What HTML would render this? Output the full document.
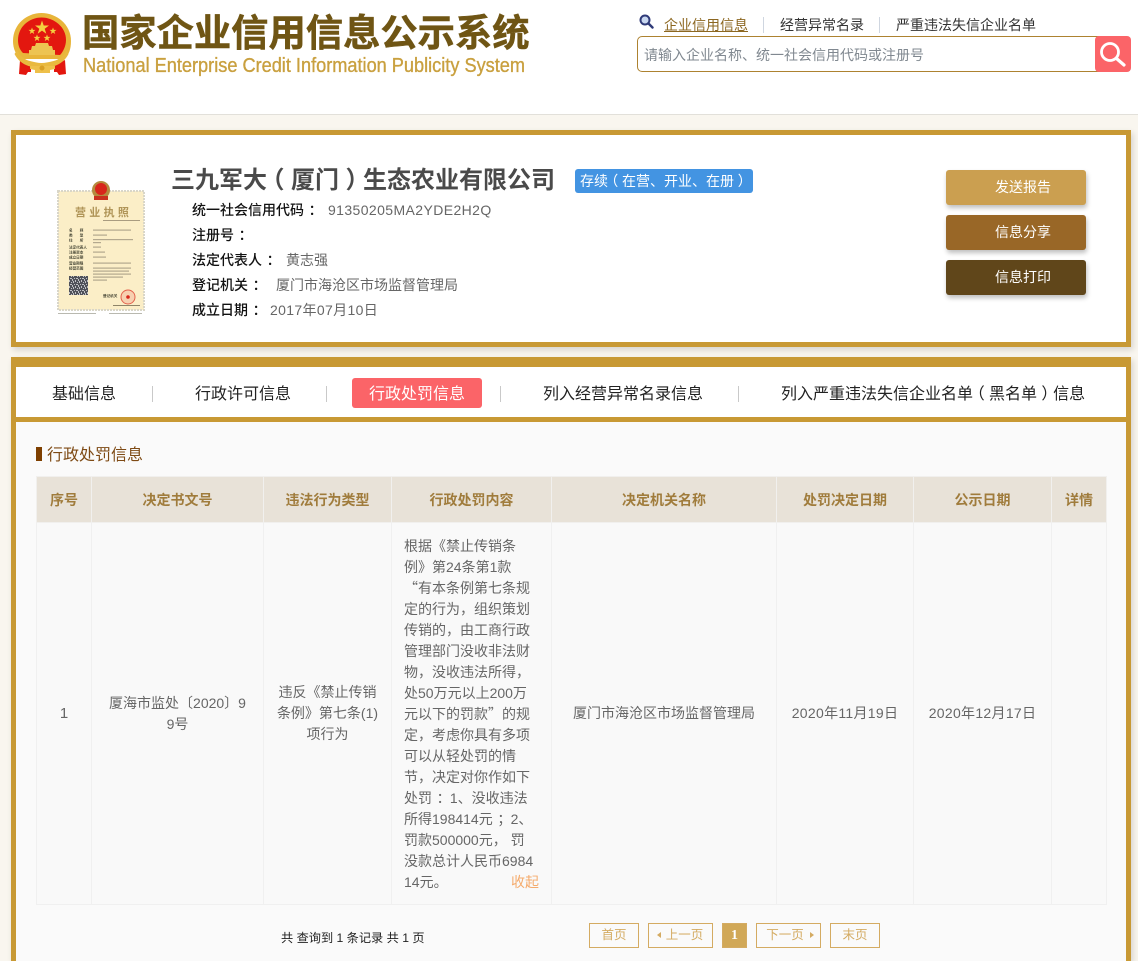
<!DOCTYPE html>
<html lang="zh-CN">
<head>
<meta charset="utf-8">
<title>国家企业信用信息公示系统</title>
<style>
*{margin:0;padding:0;box-sizing:border-box}
html,body{width:1138px;height:961px;overflow:hidden;background:#f9f6ef}
body{position:relative;font-family:"Liberation Sans","Noto Sans CJK SC",sans-serif;font-size:14px;color:#555}
.a{position:absolute;white-space:nowrap}
#hd{position:absolute;left:0;top:0;width:1138px;height:115px;background:#fff;border-bottom:1px solid #e2e0da}
.panel{position:absolute;left:11px;width:1120px;background:#fff;border:5px solid #c89934;box-shadow:2px 3px 6px rgba(0,0,0,.14)}
.btn{position:absolute;left:946px;width:140px;height:35px;border-radius:3px;color:#fff;font-size:14px;line-height:35px;text-align:left;padding-left:49px;box-shadow:1px 3px 5px rgba(0,0,0,.25)}
.lb{color:#111;font-weight:500}
.tab{position:absolute;top:383.500px;font-size:16px;line-height:22px;color:#222;white-space:nowrap}
.sep{position:absolute;top:386px;width:1px;height:16px;background:#c9c9c9}
table{position:absolute;left:36px;top:476px;width:1070px;height:429px;border-collapse:collapse;table-layout:fixed;font-size:14px;color:#666}
th{background:#e8e2d8;color:#a07c3c;font-size:14px;font-weight:700;height:46px;border:1px solid #f1f0ee;text-align:center}
td{background:#f9f9f9;border:1px solid #f0f0f0;text-align:center;vertical-align:middle;line-height:21px;padding:0 12px}
.pg{position:absolute;top:923px;height:25px;border:1px solid #d4ab62;color:#d4ab62;font-size:12.500px;line-height:23px;text-align:center;white-space:nowrap}
.tri{position:absolute;top:8px;width:0;height:0;border-top:3.500px solid transparent;border-bottom:3.500px solid transparent}
.l{position:relative;left:-.27em}
.r{position:relative;left:.27em}
.c{position:relative;left:.33em}
.q{font-family:"Noto Sans CJK SC",sans-serif}
</style>
</head>
<body>
<div id="hd"></div>

<svg class="a" style="left:12px;top:12px" width="60" height="66" viewBox="12 12 60 66">
  <path d="M20 60l11 5 0 7-3 0-2 3-7-1z" fill="#e3170f"/>
  <path d="M65 60l-11 5 0 7 3 0 2 3 7-1z" fill="#e3170f"/>
  <path d="M41.500 13C27 13 13 24 13 41c0 8 3 14 8 18l43 0c5-4 7-10 7-18C71 24 56 13 41.500 13z" fill="#e8b53a"/>
  <path d="M41.500 17.500C29 17.500 18 27 18 40c0 6 2 10 5 13l37 2c3-3 6-9 6-15C66 27 54 17.500 41.500 17.500z" fill="#e3170f"/>
  <path d="M42 20.500l1.700 5 5.300 0-4.300 3.200 1.600 5.100-4.300-3.200-4.300 3.200 1.600-5.100-4.300-3.200 5.300 0z" fill="#f4d03f"/>
  <path d="M32 27.500l.9 2.400 2.600 0-2.100 1.600.8 2.500-2.200-1.500-2.200 1.500.8-2.500-2.100-1.600 2.600 0z" fill="#f4d03f"/>
  <path d="M53 27.500l.9 2.400 2.600 0-2.100 1.600.8 2.500-2.200-1.500-2.200 1.500.8-2.500-2.100-1.600 2.600 0z" fill="#f4d03f"/>
  <path d="M37 34.500l.9 2.400 2.600 0-2.100 1.600.8 2.500-2.200-1.500-2.200 1.500.8-2.500-2.100-1.600 2.600 0z" fill="#f4d03f"/>
  <path d="M47 34.500l.9 2.400 2.600 0-2.100 1.600.8 2.500-2.200-1.500-2.200 1.500.8-2.500-2.100-1.600 2.600 0z" fill="#f4d03f"/>
  <path d="M36 43h12l1 3h3l1 4h2v5H29v-5h2l1-4h3z" fill="#edc452"/>
  <path d="M17 50c3 6 8 10 13 11 4 1 8 2 11.500 2s8-1 12-2c5-1 10-5 13-11l2 4c-3 6-8 10-14 12-4 1-9 2-13 2s-9-1-13-2c-6-2-11-6-14-12z" fill="#e9b93e"/>
  <path d="M30 66h25v3l-5 1v3H35v-3l-5-1z" fill="#eec04a"/>
  <circle cx="42" cy="68" r="2.500" fill="#d99f22"/>
</svg>

<div class="a" style="left:82px;top:10px;font-size:37.300px;line-height:46px;font-weight:700;color:#6f5514;-webkit-text-stroke:.5px #6f5514">国家企业信用信息公示系统</div>
<svg class="a" style="left:83px;top:54px" width="445" height="24"><text x="0" y="18" font-family="Liberation Sans" font-size="20" fill="#c9a03f" stroke="#c9a03f" stroke-width=".35" textLength="442" lengthAdjust="spacingAndGlyphs">National Enterprise Credit Information Publicity System</text></svg>

<svg class="a" style="left:639px;top:14px" width="15" height="16" viewBox="0 0 15 16">
  <circle cx="6" cy="6" r="4.500" fill="#c9d8f0" stroke="#2f3a78" stroke-width="2"/>
  <path d="M9.500 9.500L13.500 13.500" stroke="#2f3a78" stroke-width="2.400" stroke-linecap="round"/>
</svg>
<div class="a" style="left:664px;top:15px;font-size:14px;line-height:21px;color:#8c6720;text-decoration:underline">企业信用信息</div>
<div class="a" style="left:763px;top:17px;width:1px;height:16px;background:#cfd6e0"></div>
<div class="a" style="left:780px;top:15px;font-size:14px;line-height:21px;color:#333">经营异常名录</div>
<div class="a" style="left:879px;top:17px;width:1px;height:16px;background:#cfd6e0"></div>
<div class="a" style="left:896px;top:15px;font-size:14px;line-height:21px;color:#333">严重违法失信企业名单</div>

<div class="a" style="left:637px;top:36px;width:470px;height:36px;background:#fff;border:1px solid #ad8230;border-radius:5px 0 0 5px;font-size:14px;line-height:36px;color:#808890;padding-left:6px">请输入企业名称、统一社会信用代码或注册号</div>
<div class="a" style="left:1095px;top:36px;width:36px;height:36px;background:#fb6468;border-radius:4px"></div>
<svg class="a" style="left:1095px;top:36px" width="36" height="36" viewBox="0 0 36 36">
  <circle cx="15" cy="16" r="8.500" fill="none" stroke="#fff" stroke-width="2.800"/>
  <path d="M21.500 22.500l7.500 6.500" stroke="#fff" stroke-width="3.200" stroke-linecap="round"/>
</svg>

<!-- Panel 1 -->
<div class="panel" style="top:130px;height:217px"></div>

<svg class="a" style="left:57px;top:179px" width="88" height="136" viewBox="0 0 88 136">
  <defs>
    <pattern id="qr" width="6" height="6" patternUnits="userSpaceOnUse">
      <rect width="6" height="6" fill="#50525a"/>
      <path d="M0 0h1v1H0zM2 1h1v1H2zM4 0h1v2H4zM1 3h2v1H1zM5 3h1v1H5zM3 4h1v2H3zM0 5h1v1H0z" fill="#bfc0c4"/>
    </pattern>
  </defs>
  <rect x="1" y="12" width="86" height="119" fill="#fbeec7" stroke="#d9d6c8" stroke-width="2" stroke-dasharray="2 1"/>
  <circle cx="44" cy="11" r="9" fill="#b58a3e"/>
  <circle cx="44" cy="10" r="6" fill="#d8261b"/>
  <rect x="37" y="17" width="14" height="4" fill="#c9301f"/>
  <text x="18" y="37" font-size="11" font-weight="700" fill="#b09558" font-family="Noto Sans CJK SC" letter-spacing="3.300">营业执照</text>
  <rect x="46" y="41" width="37" height="1" fill="#a99c80"/>
  <g fill="#b3a88e">
    <text x="12" y="52.500" font-size="3.600" fill="#443" font-family="Noto Sans CJK SC" font-weight="700">名　　称</text>
    <text x="12" y="57.500" font-size="3.600" fill="#443" font-family="Noto Sans CJK SC" font-weight="700">类　　型</text>
    <text x="12" y="62.500" font-size="3.600" fill="#443" font-family="Noto Sans CJK SC" font-weight="700">住　　所</text>
    <text x="12" y="69.500" font-size="3.600" fill="#443" font-family="Noto Sans CJK SC" font-weight="700">法定代表人</text>
    <text x="12" y="74.500" font-size="3.600" fill="#443" font-family="Noto Sans CJK SC" font-weight="700">注册资本</text>
    <text x="12" y="79.500" font-size="3.600" fill="#443" font-family="Noto Sans CJK SC" font-weight="700">成立日期</text>
    <text x="12" y="85.500" font-size="3.600" fill="#443" font-family="Noto Sans CJK SC" font-weight="700">营业期限</text>
    <text x="12" y="90.500" font-size="3.600" fill="#443" font-family="Noto Sans CJK SC" font-weight="700">经营范围</text>
    <rect x="36" y="50.500" width="38" height="1.200"/>
    <rect x="36" y="55.500" width="14" height="1.200"/>
    <rect x="36" y="60" width="40" height="1.200"/>
    <rect x="36" y="63" width="8" height="1.200"/>
    <rect x="36" y="67.500" width="8" height="1.200"/>
    <rect x="36" y="72.500" width="12" height="1.200"/>
    <rect x="36" y="77.500" width="13" height="1.200"/>
    <rect x="36" y="83.500" width="38" height="1.200"/>
    <rect x="36" y="88.500" width="38" height="1.200"/>
    <rect x="36" y="91.500" width="36" height="1.200"/>
    <rect x="36" y="94.500" width="38" height="1.200"/>
    <rect x="36" y="97.500" width="30" height="1.200"/>
    <rect x="36" y="100.500" width="14" height="1.200"/>
  </g>
  <rect x="12" y="97" width="19" height="19" fill="url(#qr)"/>
  <text x="46" y="118" font-size="3.600" fill="#443" font-family="Noto Sans CJK SC" font-weight="700">登记机关</text>
  <circle cx="71" cy="118" r="7" fill="#f7d0b0" stroke="#e3614c" stroke-width="1"/>
  <circle cx="71" cy="118" r="1.800" fill="#d8261b"/>
  <rect x="56" y="126" width="27" height="1" fill="#8e8468"/>
  <rect x="1" y="134" width="38" height="1" fill="#b9b9b0"/>
  <rect x="52" y="134" width="33" height="1" fill="#b9b9b0"/>
</svg>

<div class="a" style="left:171px;top:164px;font-size:24px;line-height:34px;font-weight:700;color:#4a4a4a">三九军大<span class="l">（</span>厦门<span class="r">）</span>生态农业有限公司</div>
<div class="a" style="left:575px;top:169px;width:178px;height:24px;background:#4394e2;border-radius:3px;color:#fff;font-size:14px;line-height:24px;padding-left:5px">存续<span class="l">（</span>在营、开业、在册<span class="r">）</span></div>

<div class="a lb" style="left:192px;top:199px;line-height:22px">统一社会信用代码<span class="c">：</span></div>
<div class="a" style="left:328px;top:199px;line-height:22px;color:#666;letter-spacing:.4px">91350205MA2YDE2H2Q</div>
<div class="a lb" style="left:192px;top:224px;line-height:22px">注册号<span class="c">：</span></div>
<div class="a lb" style="left:192px;top:249px;line-height:22px">法定代表人<span class="c">：</span></div>
<div class="a" style="left:286px;top:249px;line-height:22px;color:#666">黄志强</div>
<div class="a lb" style="left:192px;top:274px;line-height:22px">登记机关<span class="c">：</span></div>
<div class="a" style="left:276px;top:274px;line-height:22px;color:#666">厦门市海沧区市场监督管理局</div>
<div class="a lb" style="left:192px;top:299px;line-height:22px">成立日期<span class="c">：</span></div>
<div class="a" style="left:270px;top:299px;line-height:22px;color:#666;letter-spacing:.35px">2017年07月10日</div>

<div class="btn" style="top:170px;background:#cb9f50">发送报告</div>
<div class="btn" style="top:215px;background:#996727">信息分享</div>
<div class="btn" style="top:260px;background:#60461a">信息打印</div>

<!-- Panel 2 -->
<div class="a" style="left:11px;top:357px;width:1120px;height:604px;background:#fafafa;border-left:5px solid #c89934;border-right:5px solid #c89934;box-shadow:2px 3px 6px rgba(0,0,0,.14)"></div>
<div class="a" style="left:11px;top:357px;width:1120px;height:10px;background:#c89934"></div>
<div class="a" style="left:16px;top:367px;width:1110px;height:50px;background:#fff"></div>
<div class="a" style="left:16px;top:417px;width:1110px;height:5px;background:#c89934"></div>

<div class="tab" style="left:52px">基础信息</div>
<div class="sep" style="left:152px"></div>
<div class="tab" style="left:195px">行政许可信息</div>
<div class="sep" style="left:326px"></div>
<div class="a" style="left:352px;top:378px;width:130px;height:30px;background:#fb6468;border-radius:3px"></div>
<div class="tab" style="left:369px;color:#fff">行政处罚信息</div>
<div class="sep" style="left:500px"></div>
<div class="tab" style="left:543px">列入经营异常名录信息</div>
<div class="sep" style="left:738px"></div>
<div class="tab" style="left:781px">列入严重违法失信企业名单<span class="l">（</span>黑名单<span class="r">）</span>信息</div>

<div class="a" style="left:36px;top:447px;width:6px;height:14px;background:#7e3f00"></div>
<div class="a" style="left:47px;top:445px;font-size:16px;line-height:22px;color:#7e4a14">行政处罚信息</div>

<table>
<colgroup><col style="width:55px"><col style="width:172px"><col style="width:128px"><col style="width:160px"><col style="width:225px"><col style="width:137px"><col style="width:138px"><col style="width:55px"></colgroup>
<tr><th>序号</th><th>决定书文号</th><th>违法行为类型</th><th>行政处罚内容</th><th>决定机关名称</th><th>处罚决定日期</th><th>公示日期</th><th>详情</th></tr>
<tr>
<td style="font-size:15px;padding-right:12px">1</td>
<td>厦海市监处〔2020〕9<br>9号</td>
<td style="padding:0 8px">违反《禁止传销<br>条例》第七条(1)<br>项行为</td>
<td style="text-align:left;padding:0;position:relative"></td>
<td>厦门市海沧区市场监督管理局</td>
<td style="padding:0;letter-spacing:.3px">2020年11月19日</td>
<td style="padding:0;letter-spacing:.3px">2020年12月17日</td>
<td></td>
</tr>
</table>

<div class="a" style="left:404px;top:536px;width:140px;font-size:14px;line-height:21px;color:#666;white-space:nowrap">根据《禁止传销条<br>例》第24条第1款<br><span class="q">“</span>有本条例第七条规<br>定的行为，组织策划<br>传销的，由工商行政<br>管理部门没收非法财<br>物，没收违法所得，<br>处50万元以上200万<br>元以下的罚款<span class="q">”</span>的规<br>定，考虑你具有多项<br>可以从轻处罚的情<br>节，决定对你作如下<br>处罚<span class="c">：</span> 1、没收违法<br>所得198414元<span class="c">；</span> 2、<br>罚款500000元， 罚<br>没款总计人民币6984<br>14元。</div>
<div class="a" style="left:511px;top:872px;font-size:14px;line-height:21px;color:#f5ab6c">收起</div>

<div class="a" style="left:281px;top:929px;font-size:12.200px;line-height:18px;color:#222">共 查询到 1 条记录 共 1 页</div>

<div class="pg" style="left:589px;width:50px">首页</div>
<div class="pg" style="left:648px;width:65px;padding-left:8px"><i class="tri" style="left:8px;border-right:4px solid #d4ab62"></i>上一页</div>
<div class="pg" style="left:722px;width:25px;background:#d1a857;color:#fff;font-family:'Liberation Serif',serif;font-size:14px;font-weight:700">1</div>
<div class="pg" style="left:756px;width:65px;padding-right:7px">下一页<i class="tri" style="right:6px;border-left:4px solid #d4ab62"></i></div>
<div class="pg" style="left:830px;width:50px">末页</div>
</body>
</html>
